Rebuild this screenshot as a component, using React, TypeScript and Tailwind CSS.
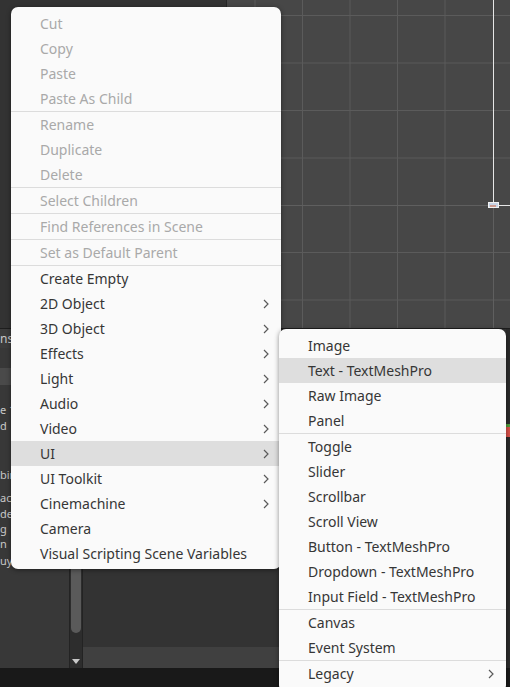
import React from 'react';

type Item = { label: string; disabled?: boolean; sub?: boolean; active?: boolean };

const mainGroups: Item[][] = [
  [
    { label: 'Cut', disabled: true },
    { label: 'Copy', disabled: true },
    { label: 'Paste', disabled: true },
    { label: 'Paste As Child', disabled: true },
  ],
  [
    { label: 'Rename', disabled: true },
    { label: 'Duplicate', disabled: true },
    { label: 'Delete', disabled: true },
  ],
  [{ label: 'Select Children', disabled: true }],
  [{ label: 'Find References in Scene', disabled: true }],
  [{ label: 'Set as Default Parent', disabled: true }],
  [
    { label: 'Create Empty' },
    { label: '2D Object', sub: true },
    { label: '3D Object', sub: true },
    { label: 'Effects', sub: true },
    { label: 'Light', sub: true },
    { label: 'Audio', sub: true },
    { label: 'Video', sub: true },
    { label: 'UI', sub: true, active: true },
    { label: 'UI Toolkit', sub: true },
    { label: 'Cinemachine', sub: true },
    { label: 'Camera' },
    { label: 'Visual Scripting Scene Variables' },
  ],
];

const uiGroups: Item[][] = [
  [
    { label: 'Image' },
    { label: 'Text - TextMeshPro', active: true },
    { label: 'Raw Image' },
    { label: 'Panel' },
  ],
  [
    { label: 'Toggle' },
    { label: 'Slider' },
    { label: 'Scrollbar' },
    { label: 'Scroll View' },
    { label: 'Button - TextMeshPro' },
    { label: 'Dropdown - TextMeshPro' },
    { label: 'Input Field - TextMeshPro' },
  ],
  [{ label: 'Canvas' }, { label: 'Event System' }],
  [{ label: 'Legacy', sub: true }],
];

function Chevron() {
  return (
    <svg width="6" height="10" viewBox="0 0 6 10" className="shrink-0">
      <polyline points="1,1 5,5 1,9" fill="none" stroke="#5a5a5a" strokeWidth="1.2" />
    </svg>
  );
}

function Menu({ groups, className }: { groups: Item[][]; className: string }) {
  return (
    <div className={className}>
      {groups.map((g, gi) => (
        <div key={gi} className={gi > 0 ? 'border-t border-[#dcdcdc]' : ''}>
          {g.map((it) => (
            <div
              key={it.label}
              className={`h-[25px] flex items-center pl-[29px] pr-[12px] ${it.active ? 'bg-[#dedede]' : ''}`}
            >
              <span className={`flex-1 whitespace-nowrap ${it.disabled ? 'text-[#a9a9a9]' : 'text-[#363636]'}`}>
                {it.label}
              </span>
              {it.sub && <Chevron />}
            </div>
          ))}
        </div>
      ))}
    </div>
  );
}

function SceneGrid() {
  const xs = [207, 255, 302.5, 350, 397.5, 445];
  const ys = [15.5, 63, 110.5, 158, 252.5, 300];
  return (
    <svg width="283" height="328" viewBox="227 0 283 328" className="block">
      {xs.map((x) => (
        <line key={x} x1={x} y1={0} x2={x} y2={328} stroke="#5b5b5b" strokeWidth="1" />
      ))}
      {ys.map((y) => (
        <line key={y} x1={227} y1={y} x2={510} y2={y} stroke="#5b5b5b" strokeWidth="1" />
      ))}
      <line x1={493.5} y1={205} x2={493.5} y2={328} stroke="#5f5f5f" strokeWidth="1" />
      <line x1={227} y1={205.5} x2={493} y2={205.5} stroke="#5f5f5f" strokeWidth="1" />
      <line x1={493.5} y1={0} x2={493.5} y2={205} stroke="#e6e6e6" strokeWidth="1" />
      <line x1={493} y1={205.5} x2={510} y2={205.5} stroke="#e6e6e6" strokeWidth="1" />
      <rect x={488.5} y={202.5} width={10} height={5} fill="#c8d4e6" stroke="#f2f2f2" strokeWidth="1" />
      <line x1={490} y1={206} x2={496} y2={206} stroke="#d2643c" strokeWidth="1" />
    </svg>
  );
}

export default function App() {
  return (
    <div
      className="relative w-[510px] h-[687px] overflow-hidden bg-[#333333] text-[14px]"
      style={{ fontFamily: '"Noto Sans", "Open Sans", sans-serif' }}
    >
      {/* editor background */}
      <div className="flex flex-col h-full">
        <div className="h-[328px] flex">
          <div className="w-[226px] bg-[#333333]" />
          <div className="w-px bg-[#262626]" />
          <div className="flex-1 bg-[#474747]">
            <SceneGrid />
          </div>
        </div>
        <div className="h-px bg-[#1e1e1e]" />
        <div className="flex-1 flex">
          <div className="w-[69px] flex flex-col bg-[#383838] text-[11px] text-[#c8c8c8] leading-[15px] whitespace-nowrap">
            <div className="h-[19px] bg-[#3c3c3c] leading-[19px] text-[12px]">nsole</div>
            <div className="h-[20px] bg-[#383838]" />
            <div className="h-[17px] bg-[#4a4a4a]" />
            <div className="flex-1 flex flex-col">
              <div className="h-[15px] mt-[17px]">e 1</div>
              <div className="h-[15px] mt-[1px]">d</div>
              <div className="h-[15px] mt-[34px]">bin</div>
              <div className="h-[15px] mt-[8px]">act</div>
              <div className="h-[15px] mt-[1px]">de</div>
              <div className="h-[15px]">g</div>
              <div className="h-[15px]">n</div>
              <div className="h-[15px] mt-[2px]">uy</div>
            </div>
          </div>
          <div className="w-[14px] bg-[#2d2d2d] border-x border-[#232323] flex flex-col items-center pt-[6px] pb-[4px]">
            <div className="w-[10px] flex-1 bg-[#5a5a5a] rounded-b-[5px] mb-[26px]" />
            <svg width="8" height="5" viewBox="0 0 8 5">
              <polygon points="0,0 8,0 4,5" fill="#c8c8c8" />
            </svg>
          </div>
          <div className="flex-1 flex flex-col">
            <div className="flex-1 bg-[#333333]" />
            <div className="h-[21px] bg-[#404040]" />
          </div>
        </div>
        <div className="h-[19px] bg-[#191919]" />
      </div>

      {/* right edge of the panel behind the submenu */}
      <div className="absolute left-[506px] top-[329px] w-[4px] h-[339px] bg-[#2b2b2b]">
        <div className="mt-[95px] h-[3px] bg-[#4f9a3a]" />
        <div className="h-[10px] bg-[#d9514a]" />
      </div>

      <Menu
        groups={mainGroups}
        className="absolute left-[11px] top-[7px] w-[270px] pt-[4px] pb-[3px] bg-[#fafafa] rounded-[7px] shadow-[0_1px_5px_rgba(0,0,0,0.45)]"
      />
      <Menu
        groups={uiGroups}
        className="absolute left-[279px] top-[329px] w-[227px] pt-[4px] pb-[6px] bg-[#fafafa] rounded-[7px] shadow-[0_1px_5px_rgba(0,0,0,0.45)]"
      />
    </div>
  );
}
